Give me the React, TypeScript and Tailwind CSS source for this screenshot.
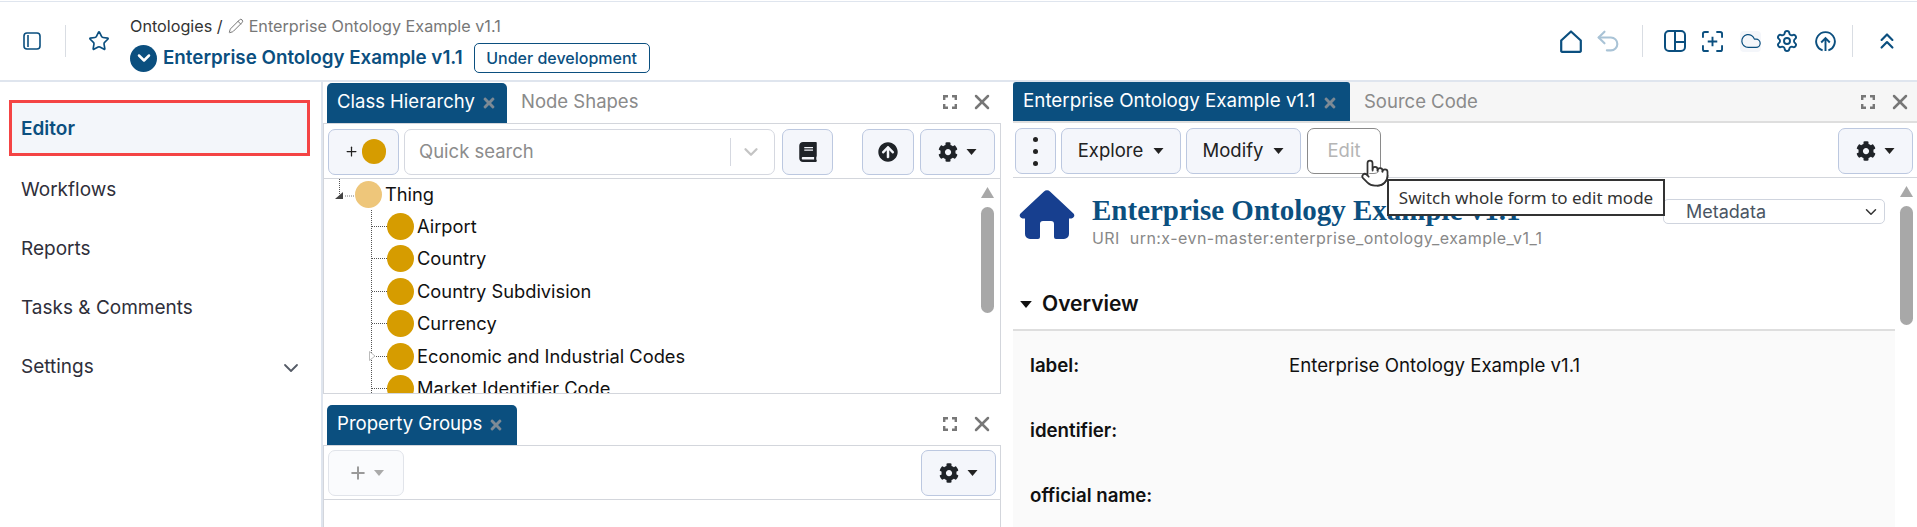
import { ChevronDown, ChevronsUp, Cloud, Pencil, Plus, Pointer, Settings, Star, Undo2, X } from "lucide-react";
import { FaArrowCircleUp, FaBook, FaCog, FaTimes } from "react-icons/fa";
import type { ReactNode } from "react";

const navy = "text-[#0b4f7f]";
const btn = "flex items-center justify-center h-[46px] rounded-[7px] border border-[#bcc8e0] bg-[#f4f6fb] text-[#222]";

function Caret({ className }: { className?: string }) {
  return (
    <svg viewBox="0 0 10 6" className={className ?? "w-[11px] h-[6px] text-[#222]"}>
      <path d="M0 0h10L5 6z" fill="currentColor" />
    </svg>
  );
}

function TabClose() {
  return <FaTimes className="w-[16px] h-[16px] text-[#7d8a95] ml-[6px] mt-[2px] shrink-0" />;
}

function PanelIcons() {
  return (
    <div className="ml-auto flex items-center gap-[13px] text-[#777]">
      <svg viewBox="0 0 14 14" className="w-[14px] h-[14px]" fill="none" stroke="currentColor" strokeWidth="2.4">
        <path d="M1.200 5V1.200H5M9 1.200h3.800V5M1.200 9v3.800H5M9 12.800h3.800V9" />
      </svg>
      <X className="w-[24px] h-[24px]" strokeWidth={2.5} />
    </div>
  );
}

function GearBtn() {
  return (
    <button className={`${btn} w-[75px] gap-[8px]`}>
      <FaCog className="w-[20px] h-[20px] text-[#1f2328]" />
      <Caret />
    </button>
  );
}

function Scrollbar({ thumb }: { thumb: string }) {
  return (
    <div className="w-[13px] shrink-0 flex flex-col items-center text-[#a8a8a8] pt-[8px]">
      <svg viewBox="0 0 13 11" className="w-[13px] h-[11px] shrink-0">
        <path d="M6.5 0L13 11H0z" fill="currentColor" />
      </svg>
      <div className={`w-[13px] mt-[9px] rounded-full bg-[#a8a8a8] shrink-0 ${thumb}`} />
    </div>
  );
}

function TreeRow({ children, closed }: { children: ReactNode; closed?: boolean }) {
  return (
    <div className="relative h-[32.5px] flex items-center whitespace-nowrap">
      {closed && (
        <svg viewBox="0 0 7 10" className="absolute left-[-3px] top-[11px] w-[7px] h-[10px]">
          <path d="M.5.5L6 5 .5 9.500z" fill="white" stroke="#bbb" />
        </svg>
      )}
      <span className="w-[15px] border-t border-dotted border-[#555]" />
      <span className="w-[27px] h-[27px] rounded-full bg-[#d69c00] shrink-0" />
      <span className="ml-[3px] text-[18.3px] text-[#111]">{children}</span>
    </div>
  );
}

export default function App() {
  return (
    <div className="w-[1917px] h-[527px] overflow-hidden bg-white flex flex-col font-[Inter,sans-serif]">
      <header className="h-[81px] shrink-0 mt-px border-t border-b-2 border-[#dfe5ee] flex items-center pr-[17px]">
        <div className={`flex items-center ${navy} pl-[23px]`}>
          <svg viewBox="0 0 18 18" className="w-[18px] h-[18px]" fill="none" stroke="currentColor" strokeWidth="1.6">
            <rect x="1" y="1" width="16" height="16" rx="3" />
            <path d="M5 3v12" />
          </svg>
          <div className="w-px h-[32px] bg-[#d9dde3] ml-[24px] mr-[22px]" />
          <Star className="w-[22px] h-[22px]" strokeWidth={1.8} />
        </div>
        <div className="ml-[20px] pt-[7px]">
          <div className="flex items-center text-[16.2px] leading-[20px] mb-[7px]">
            <span className="text-[#333]">Ontologies /</span>
            <Pencil className="w-[16px] h-[16px] text-[#777] ml-[5px] mr-[5px]" strokeWidth={1.5} />
            <span className="text-[#777]">Enterprise Ontology Example v1.1</span>
          </div>
          <div className="flex items-center">
            <span className="w-[27px] h-[27px] rounded-full bg-[#0b4f7f] flex items-center justify-center">
              <ChevronDown className="w-[20px] h-[20px] text-white" strokeWidth={3} />
            </span>
            <span className={`ml-[6px] text-[18.8px] font-semibold ${navy} whitespace-nowrap`}>Enterprise Ontology Example v1.1</span>
            <span className={`ml-[11px] h-[30px] w-[176px] flex items-center justify-center rounded-[5px] border border-[#0b4f7f] text-[16px] font-medium ${navy}`}>Under development</span>
          </div>
        </div>
        <div className={`ml-auto flex items-center ${navy}`}>
          <svg viewBox="0 0 22 23" className="w-[22px] h-[23px]" fill="none" stroke="currentColor" strokeWidth="2.2" strokeLinejoin="round">
            <path d="M1.200 10.500L11 1.500l9.800 9V21a.8.8 0 01-.8.8H2a.8.8 0 01-.8-.8z" />
          </svg>
          <Undo2 className="w-[28px] h-[28px] ml-[12px] text-[#a9c3d6]" strokeWidth={1.8} />
          <div className="w-px h-[32px] bg-[#d9dde3] ml-[20px] mr-[21px]" />
          <svg viewBox="0 0 22 22" className="w-[22px] h-[22px]" fill="none" stroke="currentColor" strokeWidth="2">
            <rect x="1" y="1" width="20" height="20" rx="4" />
            <path d="M11 1v20M11 12h10" />
          </svg>
          <svg viewBox="0 0 22 22" className="w-[21px] h-[21px] ml-[16px]" fill="none" stroke="currentColor" strokeWidth="2">
            <path d="M7 1H3a2 2 0 00-2 2v4M15 1h4a2 2 0 012 2v4M7 21H3a2 2 0 01-2-2v-4M15 21h4a2 2 0 002-2v-4M11 6v10M6 11h10" />
          </svg>
          <span className="w-[21px] h-[21px] ml-[17px] rounded-[4px] bg-[#f4f6fa] flex items-center justify-center">
            <Cloud className="w-[22px] h-[22px] shrink-0" strokeWidth={1.3} />
          </span>
          <Settings className="w-[24px] h-[24px] ml-[14px]" strokeWidth={1.9} />
          <svg viewBox="0 0 22 22" className="w-[21px] h-[21px] ml-[16px]" fill="none" stroke="currentColor" strokeWidth="2">
            <path d="M8 20.300A9.800 9.800 0 1114 20.300M11 21V8M6.500 12L11 7.500l4.500 4.500" />
          </svg>
          <div className="w-px h-[32px] bg-[#d9dde3] ml-[16px] mr-[21px]" />
          <ChevronsUp className="w-[26px] h-[26px]" strokeWidth={2} />
        </div>
      </header>

      <div className="flex flex-1 min-h-0">
        <aside className="w-[323px] shrink-0 border-r-2 border-[#dfe5ee] pt-[18px] pl-[9px] pr-[11px] text-[19px] text-[#2f2f3a]">
          <div className={`h-[56px] flex items-center pl-[9px] pt-[3px] border-[3px] border-[#f44444] bg-[#f3f6fa] font-semibold ${navy}`}>Editor</div>
          <div className="h-[59px] mt-[5px] flex items-center pl-[12px]">Workflows</div>
          <div className="h-[59px] flex items-center pl-[12px]">Reports</div>
          <div className="h-[59px] flex items-center pl-[12px]">Tasks &amp; Comments</div>
          <div className="h-[59px] flex items-center pl-[12px] pr-[7px] justify-between">
            Settings
            <ChevronDown className="w-[24px] h-[24px] text-[#555b66]" strokeWidth={1.8} />
          </div>
        </aside>

        <section className="w-[690px] shrink-0 pr-[12px] flex flex-col">
          <div className="h-[41px] shrink-0 flex items-end pl-[4px] pr-[7px] text-[18.5px]">
            <div className="h-[40px] w-[180px] rounded-t-[5px] bg-[#0b4f7f] text-white flex items-center pl-[10px] pb-[2px] whitespace-nowrap">
              Class Hierarchy
              <TabClose />
            </div>
            <span className="h-[40px] flex items-center ml-[14px] pb-[2px] text-[#8a8a8a]">Node Shapes</span>
            <div className="ml-auto h-[40px] flex items-center pb-[2px]"><PanelIcons /></div>
          </div>
          <div className="h-[55px] shrink-0 border border-[#d3d6dc] border-b-0 flex items-center px-[4px] pt-[1px]">
            <button className={`${btn} w-[71px] pl-[2px]`}>
              <Plus className="w-[15px] h-[15px] text-[#222]" strokeWidth={2} />
              <span className="ml-[3px] w-[24px] h-[25px] rounded-full bg-[#d69c00]" />
            </button>
            <div className="ml-[5px] h-[46px] w-[371px] rounded-[7px] border border-[#d5d8e0] flex items-center pl-[14px] pr-[12px] text-[18.5px] text-[#8c8c8c]">
              Quick search
              <div className="ml-auto w-px h-[28px] bg-[#d5d8e0]" />
              <ChevronDown className="w-[22px] h-[22px] ml-[9px] text-[#c4c4c4]" strokeWidth={2.5} />
            </div>
            <button className={`${btn} w-[51px] ml-[7px]`}><FaBook className="w-[18px] h-[20px] text-[#1f2328]" /></button>
            <button className={`${btn} w-[52px] ml-[29px]`}><FaArrowCircleUp className="w-[20px] h-[20px] text-[#1f2328]" /></button>
            <div className="ml-[6px]"><GearBtn /></div>
          </div>
          <div className="h-[216px] shrink-0 border border-[#d3d6dc] flex overflow-hidden pr-[6px]">
            <div className="flex-1 min-w-0">
              <div className="h-[31px] flex items-center pl-[10px] whitespace-nowrap">
                <svg viewBox="0 0 21 31" className="w-[21px] h-[31px] shrink-0">
                  <path d="M5.5 0v16" stroke="#555" strokeDasharray="1 1" />
                  <path d="M9 13v7H1z" fill="#444" />
                  <path d="M11 17h10" stroke="#777" strokeDasharray="1 1" />
                </svg>
                <span className="w-[27px] h-[27px] rounded-full bg-[#eec67a] shrink-0" />
                <span className="ml-[3px] text-[18.3px] text-[#111]">Thing</span>
              </div>
              <div className="ml-[47px] border-l border-dotted border-[#555]">
                <TreeRow>Airport</TreeRow>
                <TreeRow>Country</TreeRow>
                <TreeRow>Country Subdivision</TreeRow>
                <TreeRow>Currency</TreeRow>
                <TreeRow closed>Economic and Industrial Codes</TreeRow>
                <TreeRow>Market Identifier Code</TreeRow>
              </div>
            </div>
            <Scrollbar thumb="h-[106px]" />
          </div>
          <div className="h-[51px] flex items-end pl-[4px] pr-[7px] text-[18.6px] shrink-0">
            <div className="h-[40px] w-[190px] rounded-t-[5px] bg-[#0b4f7f] text-white flex items-center pl-[10px] pb-[3px] whitespace-nowrap">
              Property Groups
              <TabClose />
            </div>
            <div className="ml-auto h-[40px] flex items-center pb-[3px]"><PanelIcons /></div>
          </div>
          <div className="h-[55px] shrink-0 border border-[#d3d6dc] flex items-center px-[4px] justify-between">
            <button className="flex items-center justify-center h-[46px] w-[76px] gap-[6px] rounded-[7px] border border-[#e1e4ea] bg-[#fafbfd] text-[#9a9a9a]">
              <Plus className="w-[20px] h-[20px]" strokeWidth={2.4} />
              <Caret className="w-[10px] h-[6px] text-[#aaa]" />
            </button>
            <GearBtn />
          </div>
          <div className="flex-1 border-x border-[#d3d6dc]" />
        </section>

        <section className="flex-1 min-w-0 flex flex-col relative">
          <div className="h-[41px] shrink-0 bg-[#f6f6f6] flex items-end pr-[5px] text-[18.5px] border-b-2 border-[#dedede]">
            <div className="h-[39px] w-[337px] rounded-t-[3px] bg-[#0b4f7f] text-white flex items-center pl-[10px] whitespace-nowrap text-[18.8px]">
              Enterprise Ontology Example v1.1
              <TabClose />
            </div>
            <span className="h-[39px] flex items-center ml-[14px] text-[#8a8a8a]">Source Code</span>
            <div className="ml-auto h-[39px] flex items-center"><PanelIcons /></div>
          </div>
          <div className="h-[55px] shrink-0 border-b border-[#d3d6dc] flex items-center pl-[2px] pr-[4px] pt-[2px] text-[18.5px]">
            <button className={`${btn} w-[41px] flex-col gap-[7px]`}>
              <span className="w-[5px] h-[5px] rounded-full bg-[#222]" />
              <span className="w-[5px] h-[5px] rounded-full bg-[#222]" />
              <span className="w-[5px] h-[5px] rounded-full bg-[#222]" />
            </button>
            <button className={`${btn} w-[120px] ml-[5px] gap-[10px]`}>Explore <Caret /></button>
            <button className={`${btn} w-[115px] ml-[5px] gap-[10px]`}>Modify <Caret /></button>
            <button className="h-[46px] w-[74px] ml-[6px] rounded-[7px] border border-[#8a8a8a] text-[#b5b5b5] bg-white flex items-center justify-center">Edit</button>
            <div className="ml-auto"><GearBtn /></div>
          </div>
          <Pointer className="absolute left-[347px] top-[75px] w-[30px] h-[32px] text-[#333] z-20" fill="white" strokeWidth={1.4} />
          <div className="absolute left-[374px] top-[97px] w-[278px] h-[37px] bg-white border-2 border-[#333] z-10 flex items-center justify-center text-[17px] text-[#333] font-['Noto_Sans',sans-serif] whitespace-nowrap">
            Switch whole form to edit mode
          </div>
          <div className="flex flex-1 min-h-0">
            <div className="flex-1 min-w-0 flex flex-col">
              <div className="h-[153px] shrink-0 flex flex-col">
                <div className="flex pl-[6px] pt-[12px]">
                  <svg viewBox="0 0 56 49" className="w-[56px] h-[49px] shrink-0 text-[#173f8f]">
                    <path d="M25 1.500a4 4 0 016 0l23.500 22a3 3 0 01-2 5H50V44a5 5 0 01-5 5h-8a2 2 0 01-2-2V34a3 3 0 00-3-3h-8a3 3 0 00-3 3v13a2 2 0 01-2 2h-8a5 5 0 01-5-5V28.500H3.500a3 3 0 01-2-5z" fill="currentColor" />
                  </svg>
                  <div className="ml-[17px] pt-[2px]">
                    <div className={`text-[29px] leading-[36px] font-bold font-['Liberation_Serif',serif] ${navy} whitespace-nowrap`}>Enterprise Ontology Example v1.1</div>
                    <div className="text-[16px] leading-[20px] tracking-[0.45px] text-[#888] whitespace-nowrap">URI&nbsp; urn:x-evn-master:enterprise_ontology_example_v1_1</div>
                  </div>
                  <div className="ml-auto mr-[10px] mt-[9px] h-[25px] w-[222px] shrink-0 rounded-[5px] border border-[#cfd4de] flex items-center pl-[22px] pr-[4px] text-[18px] text-[#4a5563]">
                    Metadata
                    <ChevronDown className="w-[18px] h-[18px] ml-auto text-[#333]" strokeWidth={2} />
                  </div>
                </div>
                <div className="mt-auto flex items-center h-[52px] pl-[7px] border-b-2 border-[#dedede]">
                  <Caret className="w-[12px] h-[7px] text-[#111]" />
                  <span className="ml-[10px] text-[21px] font-semibold text-[#111]">Overview</span>
                </div>
              </div>
              <div className="flex-1 bg-[#fafafa] pl-[17px] text-[18.7px] text-[#111]">
                <div className="h-[64px] mt-[3px] flex items-center">
                  <span className="w-[259px] font-semibold">label:</span>
                  <span>Enterprise Ontology Example v1.1</span>
                </div>
                <div className="h-[65px] pt-[2px] flex items-center font-semibold">identifier:</div>
                <div className="h-[64px] pt-[2px] flex items-center font-semibold">official name:</div>
              </div>
            </div>
            <div className="w-[22px] shrink-0 flex pl-[5px]">
              <Scrollbar thumb="h-[119px]" />
            </div>
          </div>
        </section>
      </div>
    </div>
  );
}
